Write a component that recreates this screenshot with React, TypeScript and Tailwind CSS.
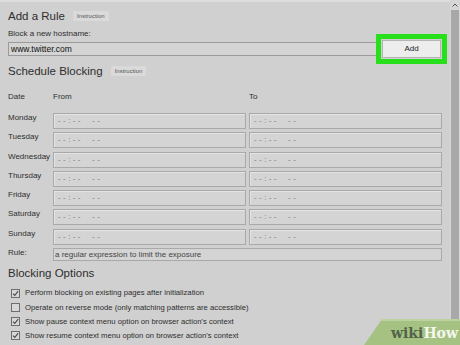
import React from "react";

const days = ["Monday", "Tuesday", "Wednesday", "Thursday", "Friday", "Saturday", "Sunday"];

const options = [
    { label: "Perform blocking on existing pages after initialization", checked: true },
    { label: "Operate on reverse mode (only matching patterns are accessible)", checked: false },
    { label: "Show pause context menu option on browser action's context", checked: true },
    { label: "Show resume context menu option on browser action's context", checked: true },
];

function Badge() {
    return (
        <span className="ml-[8px] px-[4px] h-[10px] leading-[10px] text-[6px] text-[#555] bg-[#dadada] rounded-[1px]">
            Instruction
        </span>
    );
}

function TimeInput() {
    return (
        <div className="w-[193px] h-full flex items-center pl-[4px] border border-[#a9a9a9] bg-[#d4d4d4] shadow-[inset_1px_1px_0_#e4e4e4]">
            <span className="text-[8px] text-[#7a7a7a] tracking-[2.4px] whitespace-pre">--:--  --</span>
        </div>
    );
}

function CheckBox({ checked }: { checked: boolean }) {
    return (
        <svg width="9" height="9" viewBox="0 0 9 9" className="shrink-0">
            <rect x="0.5" y="0.5" width="8" height="8" fill="#d8d8d8" stroke="#6e6e6e" />
            {checked && <path d="M2 4.6 L3.8 6.4 L7.2 2.2" fill="none" stroke="#4a4a4a" strokeWidth="1.1" />}
        </svg>
    );
}

export default function App() {
    return (
        <div className="relative w-[460px] h-[345px] overflow-hidden flex bg-[#d0d0d0] text-[#2a2a2a] font-['Liberation_Sans',Arial,sans-serif]">
            <div className="flex-1 flex flex-col">
                <div className="h-[2px] bg-[#dedede]" />
                <div className="pl-[8px] pr-[3px] flex flex-col">
                    {/* Add a rule */}
                    <div className="mt-[7px] h-[14px] flex items-center">
                        <span className="text-[11.5px] leading-[14px] text-[#2e2e2e]">Add a Rule</span>
                        <Badge />
                    </div>
                    <div className="mt-[6px] h-[10px] leading-[10px] text-[8px] text-[#2e2e2e]">Block a new hostname:</div>
                    <div className="mt-[3px] h-[14px] flex items-center">
                        <div className="flex-1 h-full flex items-center pl-[2px] border border-[#9a9a9a] bg-[#d4d4d4]">
                            <span className="text-[8.5px] text-[#111]">www.twitter.com</span>
                        </div>
                        <div className="-ml-[2px] -my-[8px] w-[71px] h-[30px] shrink-0 border-[5px] border-[#27e01b] p-[1px] bg-[#d0d0d0]">
                            <div className="w-full h-full flex items-center justify-center bg-[#ededed] border border-[#b5b5b5] text-[8px] text-[#222]">
                                Add
                            </div>
                        </div>
                    </div>

                    {/* Schedule */}
                    <div className="mt-[8px] h-[14px] flex items-center">
                        <span className="text-[11.5px] leading-[14px] text-[#2e2e2e]">Schedule Blocking</span>
                        <Badge />
                    </div>
                    <div className="mt-[14px] h-[10px] flex items-center text-[8px] text-[#2e2e2e]">
                        <span className="w-[45px]">Date</span>
                        <span className="w-[196px]">From</span>
                        <span>To</span>
                    </div>
                    <div className="mt-[11px] flex flex-col gap-[3.3px]">
                        {days.map((d) => (
                            <div key={d} className="h-[16px] flex">
                                <span className="w-[45px] text-[8px] leading-[10px] text-[#2e2e2e]">{d}</span>
                                <div className="flex gap-[3px]">
                                    <TimeInput />
                                    <TimeInput />
                                </div>
                            </div>
                        ))}
                        <div className="h-[13px] flex">
                            <span className="w-[45px] text-[8px] leading-[10px] text-[#2e2e2e]">Rule:</span>
                            <div className="w-[389px] h-full flex items-center pl-[1px] border border-[#a9a9a9] bg-[#d4d4d4]">
                                <span className="text-[8px] text-[#444]">a regular expression to limit the exposure</span>
                            </div>
                        </div>
                    </div>

                    {/* Options */}
                    <div className="mt-[5px] h-[14px] text-[11.5px] leading-[14px] text-[#2e2e2e]">Blocking Options</div>
                    <div className="mt-[8px] flex flex-col gap-[4.3px]">
                        {options.map((o) => (
                            <div key={o.label} className="h-[10px] flex items-center pl-[3px] gap-[5px]">
                                <CheckBox checked={o.checked} />
                                <span className="text-[7.7px] text-[#2e2e2e] whitespace-nowrap">{o.label}</span>
                            </div>
                        ))}
                    </div>
                </div>
            </div>

            {/* scrollbar */}
            <div className="w-[10px] flex flex-col bg-[#d6d6d6]">
                <div className="h-[10px] flex items-center justify-center">
                    <svg width="6" height="4" viewBox="0 0 6 4">
                        <path d="M0.5 3.5 L3 1 L5.5 3.5" fill="none" stroke="#555" strokeWidth="1" />
                    </svg>
                </div>
                <div className="flex-1 ml-[1px] mr-[1px] bg-[#a8a8a8]" />
            </div>

            {/* wikiHow mark */}
            <div className="absolute right-0 bottom-0 w-[96px] h-[26px] [clip-path:polygon(18px_0,100%_0,100%_100%,0_100%)] bg-[#a6c283] border-t-[2px] border-[#bcd3a0] flex items-center justify-end pr-[2px]">
                <span className="text-[14px] font-bold font-['DejaVu_Serif',serif]">
                    <span className="text-[#53634a]">wiki</span>
                    <span className="text-[#f4f7ee]">How</span>
                </span>
            </div>
        </div>
    );
}
